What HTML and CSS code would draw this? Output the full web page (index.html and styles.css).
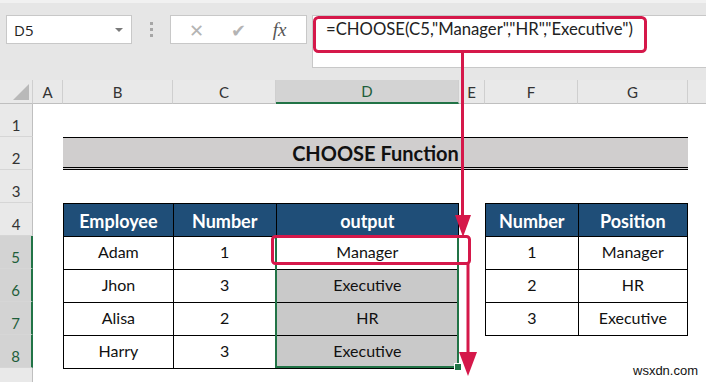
FILE: index.html
```html
<!DOCTYPE html>
<html lang="en">
<head>
  <meta charset="UTF-8">
  <title>CHOOSE Function</title>
  <link rel="stylesheet" href="styles.css">
</head>
<body>

  <div class="toolbar">
    <div class="namebox"><span>D5</span><i class="caret"></i></div>
    <div class="grip"><i></i><i></i><i></i></div>
    <div class="fbtns">
      <span class="btn dim">&#x2715;</span>
      <span class="btn dim">&#x2714;</span>
      <span class="btn fx">fx</span>
    </div>
    <div class="fbox">=CHOOSE(C5,"Manager","HR","Executive")</div>
  </div>

  <div class="sheet">
    <div class="corner"><i class="tri"></i></div>
    <div class="ch">A</div>
    <div class="ch">B</div>
    <div class="ch">C</div>
    <div class="ch sel">D</div>
    <div class="ch">E</div>
    <div class="ch">F</div>
    <div class="ch">G</div>
    <div class="ch last"></div>

    <div class="rh">1</div>
    <div class="rh">2</div>
    <div class="rh">3</div>
    <div class="rh">4</div>
    <div class="rh sel">5</div>
    <div class="rh sel">6</div>
    <div class="rh sel">7</div>
    <div class="rh sel">8</div>
    <div class="rh"></div>

    <div class="title">CHOOSE Function</div>

    <table class="data t1">
      <colgroup><col style="width:110px"><col style="width:103px"><col style="width:183px"></colgroup>
      <tr><th>Employee</th><th>Number</th><th>output</th></tr>
      <tr><td>Adam</td><td>1</td><td>Manager</td></tr>
      <tr><td>Jhon</td><td>3</td><td class="shade">Executive</td></tr>
      <tr><td>Alisa</td><td>2</td><td class="shade">HR</td></tr>
      <tr><td>Harry</td><td>3</td><td class="shade">Executive</td></tr>
    </table>

    <table class="data t2">
      <colgroup><col style="width:93px"><col style="width:110px"></colgroup>
      <tr><th>Number</th><th>Position</th></tr>
      <tr><td>1</td><td>Manager</td></tr>
      <tr><td>2</td><td>HR</td></tr>
      <tr><td>3</td><td>Executive</td></tr>
    </table>

    <div class="selection"><i class="handle"></i></div>
  </div>

  <svg class="marks" width="706" height="382" viewBox="0 0 706 382">
    <g fill="none" stroke="#d5184a" stroke-width="3">
      <rect x="314.5" y="17.5" width="331" height="34" rx="4"/>
      <line x1="462.5" y1="52" x2="462.5" y2="220"/>
      <rect x="272.5" y="236.5" width="197" height="27" rx="3"/>
      <line x1="468" y1="264" x2="468" y2="356"/>
    </g>
    <g fill="#d5184a">
      <polygon points="455,215 471,215 463,237"/>
      <polygon points="459,352 477,352 468,376"/>
    </g>
  </svg>

  <div class="watermark">wsxdn.com</div>

</body>
</html>
```

FILE: styles.css
```css
body {
  margin: 0;
  width: 706px;
  height: 382px;
  overflow: hidden;
  position: relative;
  background: #fff;
  font-family: "Lato", "Liberation Sans", sans-serif;
}

.toolbar {
  height: 80px;
  box-sizing: border-box;
  background: #e6e6e6;
  border-top: 3px solid #f1f1f1;
  padding: 12px 0 0 6px;
  display: flex;
  align-items: flex-start;
}
.namebox {
  width: 126px;
  height: 29px;
  box-sizing: border-box;
  background: #fff;
  border: 1px solid #c8c8c8;
  display: flex;
  align-items: center;
  justify-content: space-between;
  padding: 0 8px 0 7px;
  font-family: "Open Sans", sans-serif;
  font-size: 15px;
  color: #222;
}
.caret {
  border-left: 4px solid transparent;
  border-right: 4px solid transparent;
  border-top: 4px solid #7a7a7a;
}
.grip {
  width: 38px;
  height: 29px;
  display: flex;
  flex-direction: column;
  align-items: center;
  justify-content: center;
  gap: 3px;
}
.grip i {
  width: 3px;
  height: 3px;
  background: #a6a6a6;
}
.fbtns {
  width: 137px;
  height: 29px;
  box-sizing: border-box;
  background: #fff;
  border: 1px solid #c8c8c8;
  display: flex;
  align-items: center;
  justify-content: space-around;
  padding: 0 6px 0 4px;
}
.btn {
  font-size: 18px;
  color: #444;
}
.btn.dim {
  color: #b4b4b4;
}
.fx {
  font-family: "Liberation Serif", serif;
  font-style: italic;
  font-size: 19px;
  color: #555;
}
.fbox {
  flex: 1;
  margin-left: 5px;
  height: 53px;
  box-sizing: border-box;
  background: #fff;
  border: 1px solid #c8c8c8;
  border-right: none;
  padding: 3px 0 0 13px;
  font-size: 16.7px;
  color: #222;
}

.sheet {
  display: grid;
  grid-template-columns: 33px 30px 110px 103px 183px 26px 93px 110px 1fr;
  grid-template-rows: 24px repeat(9, 33px);
  background: #fff;
}
.corner, .ch {
  background: #e9e9e9;
  border-bottom: 1px solid #bfbfbf;
  border-right: 1px solid #cfcfcf;
  box-sizing: border-box;
}
.corner {
  position: relative;
}
.tri {
  position: absolute;
  right: 3px;
  bottom: 3px;
  border-left: 16px solid transparent;
  border-bottom: 16px solid #b9b9b9;
}
.ch {
  display: flex;
  align-items: center;
  justify-content: center;
  font-size: 15px;
  color: #333;
}
.ch.sel {
  background: #d3d3d3;
  border-bottom: 2px solid #217346;
  color: #1e5e3a;
}
.ch.last {
  border-right: none;
}
.rh {
  grid-column: 1;
  background: #e9e9e9;
  border-right: 1px solid #bfbfbf;
  border-bottom: 1px solid #d6d6d6;
  box-sizing: border-box;
  display: flex;
  justify-content: center;
  padding-top: 12px;
  font-size: 15px;
  color: #333;
}
.rh.sel {
  background: #d3d3d3;
  border-right: 2px solid #217346;
  color: #1e5e3a;
}

.title {
  grid-column: 3 / 9;
  grid-row: 3;
  background: #d0cece;
  border-top: 1px solid #000;
  border-bottom: 3px double #000;
  box-sizing: border-box;
  display: flex;
  align-items: center;
  justify-content: center;
  font-size: 20px;
  font-weight: bold;
  color: #111;
}

.data {
  border-collapse: collapse;
  table-layout: fixed;
  align-self: start;
}
.t1 {
  grid-column: 3 / 6;
  grid-row: 5 / 10;
}
.t2 {
  grid-column: 7 / 9;
  grid-row: 5 / 9;
}
.data th, .data td {
  border: 1px solid #000;
  padding: 0;
  text-align: center;
}
.data th {
  height: 31px;
  background: #1f4e78;
  color: #fff;
  font-size: 18px;
  font-weight: bold;
  padding-top: 1px;
}
.data td {
  height: 28px;
  font-size: 16px;
  color: #111;
  padding-bottom: 4px;
}
.data td.shade {
  background: #c9c9c9;
}

.selection {
  grid-column: 5;
  grid-row: 6 / 10;
  margin: 0 0 0 -1px;
  border: 2px solid #217346;
  position: relative;
  z-index: 2;
}
.handle {
  position: absolute;
  right: -5px;
  bottom: -5px;
  width: 6px;
  height: 6px;
  background: #217346;
  border: 1px solid #fff;
}

.marks {
  position: absolute;
  top: 0;
  left: 0;
  z-index: 5;
  pointer-events: none;
}
.watermark {
  position: absolute;
  left: 633px;
  top: 363px;
  font-family: "Liberation Sans", sans-serif;
  font-size: 13px;
  color: #111;
}
```
